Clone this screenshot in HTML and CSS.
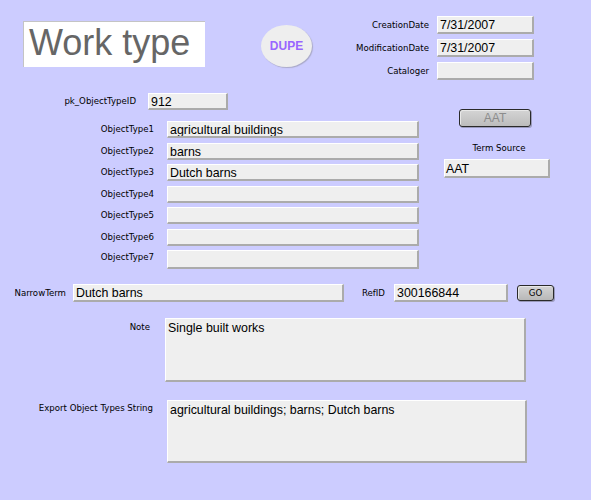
FILE: index.html
```html
<!DOCTYPE html>
<html lang="en">
<head>
<meta charset="utf-8">
<title>Work type</title>
<link rel="stylesheet" href="styles.css">
</head>
<body>
<div class="form">
  <div class="header">
    <div class="title">Work type</div>
    <div class="dupe">DUPE</div>
    <div class="meta">
      <div class="label">CreationDate</div>
      <div class="field">7/31/2007</div>
      <div class="label">ModificationDate</div>
      <div class="field">7/31/2007</div>
      <div class="label">Cataloger</div>
      <div class="field"></div>
    </div>
  </div>

  <div class="mid">
    <div class="left">
      <div class="pkrow">
        <div class="label">pk_ObjectTypeID</div>
        <div class="field">912</div>
      </div>
      <div class="types">
        <div class="label">ObjectType1</div>
        <div class="field">agricultural buildings</div>
        <div class="label">ObjectType2</div>
        <div class="field">barns</div>
        <div class="label">ObjectType3</div>
        <div class="field">Dutch barns</div>
        <div class="label">ObjectType4</div>
        <div class="field"></div>
        <div class="label">ObjectType5</div>
        <div class="field"></div>
        <div class="label">ObjectType6</div>
        <div class="field"></div>
        <div class="label label-up">ObjectType7</div>
        <div class="field"></div>
      </div>
    </div>
    <div class="right">
      <div class="aat-btn">AAT</div>
      <div class="term-label">Term Source</div>
      <div class="field term-field">AAT</div>
    </div>
  </div>

  <div class="narrow">
    <div class="label narrow-label">NarrowTerm</div>
    <div class="field narrow-field">Dutch barns</div>
    <div class="label ref-label">RefID</div>
    <div class="field ref-field">300166844</div>
    <div class="go-btn">GO</div>
  </div>

  <div class="note">
    <div class="label note-label">Note</div>
    <div class="field note-field">Single built works</div>
  </div>

  <div class="export">
    <div class="label export-label">Export Object Types String</div>
    <div class="field export-field">agricultural buildings; barns; Dutch barns</div>
  </div>
</div>
</body>
</html>
```
FILE: styles.css
```css
html, body {
  margin: 0;
  padding: 0;
  background: #ccccff;
}
.form {
  width: 591px;
  height: 500px;
  background: #ccccff;
  font-family: "Liberation Sans", Arial, sans-serif;
  color: #000;
  overflow: hidden;
}
.label {
  font-family: "DejaVu Sans", Verdana, sans-serif;
  font-size: 8.6px;
  line-height: 11px;
  text-align: right;
  white-space: nowrap;
  align-self: center;
}
.field {
  box-sizing: border-box;
  background: #efefef;
  border-top: 1px solid #ffffff;
  border-left: 1px solid #ffffff;
  border-right: 2px solid #ababab;
  border-bottom: 2px solid #ababab;
  font-size: 12.4px;
  line-height: 14px;
  padding: 1px 0 0 2px;
  white-space: nowrap;
  overflow: hidden;
}

/* header */
.header {
  display: flex;
  align-items: flex-start;
  height: 80px;
}
.title {
  box-sizing: border-box;
  margin: 21px 0 0 23px;
  width: 182px;
  height: 46px;
  background: #ffffff;
  border-top: 1px solid #c4c4c4;
  border-left: 1px solid #c4c4c4;
  color: #666666;
  font-size: 36px;
  line-height: 40px;
  padding: 1px 0 0 5px;
  white-space: nowrap;
}
.dupe {
  margin: 25px 0 0 56px;
  width: 51px;
  height: 42px;
  border-radius: 50%;
  background: #eeeeee;
  box-shadow: 1px 1px 1px #a9a9c8;
  color: #9966ff;
  font-weight: bold;
  font-size: 12px;
  display: flex;
  align-items: center;
  justify-content: center;
}
.meta {
  flex: 1;
  display: grid;
  grid-template-columns: 1fr 97px;
  grid-auto-rows: 18px;
  column-gap: 8px;
  row-gap: 5px;
  margin: 16px 57px 0 0;
}

/* middle */
.mid {
  display: flex;
  align-items: flex-start;
}
.left {
  width: 419px;
}
.pkrow {
  display: grid;
  grid-template-columns: 136px 80px;
  grid-template-rows: 17px;
  column-gap: 12px;
  margin-top: 13px;
}
.types {
  display: grid;
  grid-template-columns: 154px 252px;
  grid-template-rows: repeat(6, 17px) 19px;
  column-gap: 13px;
  row-gap: 4.5px;
  margin-top: 11px;
}
.label-up {
  align-self: start;
  margin-top: 2px;
}
.right {
  margin-left: 25px;
  width: 106px;
  padding-top: 29px;
}
.aat-btn {
  box-sizing: border-box;
  margin-left: 15px;
  width: 72px;
  height: 18px;
  border: 1px solid #2a2a2a;
  border-radius: 3px;
  background: linear-gradient(#d4d4d4, #bcbcbc);
  box-shadow: inset 1px 1px 0 #e8e8e8, 1px 1px 0 #9999bb;
  color: #8c8c8c;
  font-size: 12px;
  line-height: 16px;
  text-align: center;
}
.term-label {
  margin-top: 16px;
  font-family: "DejaVu Sans", Verdana, sans-serif;
  font-size: 8.6px;
  line-height: 11px;
  text-align: center;
  padding-left: 4px;
}
.term-field {
  margin-top: 5px;
  height: 19px;
  padding-top: 2px;
  padding-left: 1px;
}

/* narrow term row */
.narrow {
  display: flex;
  align-items: center;
  margin-top: 15px;
  height: 18px;
}
.narrow-label {
  width: 66px;
}
.narrow-field {
  margin-left: 7px;
  width: 271px;
  height: 18px;
}
.ref-label {
  width: 41px;
}
.ref-field {
  margin-left: 9px;
  width: 114px;
  height: 18px;
}
.go-btn {
  box-sizing: border-box;
  margin-left: 9px;
  width: 37px;
  height: 16px;
  border: 1px solid #2a2a2a;
  border-radius: 3px;
  background: linear-gradient(#d4d4d4, #b8b8b8);
  box-shadow: inset 1px 1px 0 #e8e8e8, 1px 1px 0 #9999bb;
  font-family: "DejaVu Sans", Verdana, sans-serif;
  font-size: 8.6px;
  line-height: 14px;
  text-align: center;
}

/* note */
.note {
  display: flex;
  align-items: flex-start;
  margin-top: 16px;
}
.note-label {
  width: 150px;
  align-self: flex-start;
  padding-top: 4px;
}
.note-field {
  margin-left: 15px;
  width: 361px;
  height: 64px;
  white-space: normal;
  padding-top: 2px;
}

/* export */
.export {
  display: flex;
  align-items: flex-start;
  margin-top: 18px;
}
.export-label {
  width: 153px;
  align-self: flex-start;
  padding-top: 3px;
}
.export-field {
  margin-left: 14px;
  width: 360px;
  height: 63px;
  white-space: normal;
  padding-top: 2px;
}
```
